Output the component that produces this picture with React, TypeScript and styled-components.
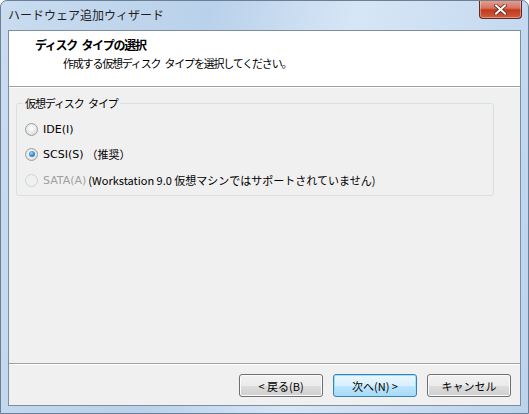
import React from "react";
import styled, { createGlobalStyle } from "styled-components";

const GlobalStyle = createGlobalStyle`
  html, body {
    margin: 0;
    padding: 0;
    background: #ffffff;
  }
  body {
    font-family: "Noto Sans CJK JP", "DejaVu Sans", sans-serif;
    font-size: 12px;
    color: #000;
  }
`;

const Window = styled.div`
  width: 529px;
  height: 414px;
  box-sizing: border-box;
  border: 1px solid #6b7f96;
  border-radius: 7px 7px 0 0;
  background: linear-gradient(100deg, #c9dcf0 0%, #b9d1ea 35%, #d7e6f6 60%, #bcd3ec 100%);
  display: flex;
  flex-direction: column;
  overflow: hidden;
`;

const TitleBar = styled.div`
  height: 29px;
  display: flex;
  align-items: flex-start;
  justify-content: space-between;
  padding-left: 7px;
`;

const TitleText = styled.span`
  margin-top: 5px;
  font-size: 12px;
  color: #1e1e1e;
`;

const CloseButton = styled.div`
  width: 41px;
  height: 18px;
  margin-right: 6px;
  margin-top: -1px;
  border: 1px solid #5d2a25;
  border-top: none;
  border-radius: 0 0 4px 4px;
  background: linear-gradient(180deg, #e8a393 0%, #d6735f 45%, #c1381d 55%, #d15b3c 100%);
  display: flex;
  align-items: center;
  justify-content: center;
  box-shadow: inset 0 0 0 1px rgba(255, 255, 255, 0.35);
`;

const Client = styled.div`
  flex: 1;
  margin: 0 7px 7px 7px;
  border: 1px solid #7e8ea0;
  background: #f0f0f0;
  display: flex;
  flex-direction: column;
`;

const Header = styled.div`
  height: 56px;
  background: #ffffff;
  border-bottom: 1px solid #a0a0a0;
  box-shadow: 0 1px 0 #ffffff;
  padding: 6px 0 0 26px;
  box-sizing: border-box;
`;

const HeaderTitle = styled.div`
  font-weight: bold;
  font-size: 12px;
  line-height: 16px;
  letter-spacing: -1.3px;
  word-spacing: 3px;
`;

const HeaderSub = styled.div`
  font-size: 11px;
  line-height: 16px;
  margin-left: 28px;
  margin-top: 2px;
  letter-spacing: -1.2px;
  word-spacing: 3px;
`;

const Body = styled.div`
  flex: 1;
  padding: 8px 26px 0 7px;
`;

const Group = styled.fieldset`
  margin: 0;
  border: 1px solid #d5dfe5;
  border-radius: 3px;
  padding: 12px 8px 8px 8px;
  height: 101px;
  box-sizing: border-box;
  display: flex;
  flex-direction: column;
  gap: 10px;
`;

const Legend = styled.legend`
  padding: 0 2px;
  margin-left: -2px;
  font-size: 11px;
  letter-spacing: -1.1px;
  word-spacing: 3px;
  color: #000;
`;

const Option = styled.div<{ $disabled?: boolean }>`
  display: flex;
  align-items: center;
  height: 16px;
  color: ${(p) => (p.$disabled ? "#a0a0a0" : "#000")};
  font-family: "DejaVu Sans", "Noto Sans CJK JP", sans-serif;
  font-size: 11px;
`;

const Radio = styled.span<{ $checked?: boolean; $disabled?: boolean }>`
  width: 11px;
  height: 11px;
  border-radius: 50%;
  border: 1px solid ${(p) => (p.$disabled ? "#cfd3d6" : "#9a9ea5")};
  background: ${(p) =>
    p.$disabled
      ? "#f0f0f0"
      : "radial-gradient(circle at 50% 40%, #ffffff 0%, #e6e6e6 60%, #d0d0d0 100%)"};
  display: inline-flex;
  align-items: center;
  justify-content: center;
  margin-right: 5px;
  flex-shrink: 0;
`;

const RadioDot = styled.span`
  width: 6px;
  height: 6px;
  border-radius: 50%;
  background: radial-gradient(circle at 40% 35%, #9fd3f4 0%, #3a8fd4 50%, #1d5f9a 100%);
`;

const Note = styled.span<{ $gap: number }>`
  margin-left: ${(p) => p.$gap}px;
  color: #000;
  font-family: "Noto Sans CJK JP", sans-serif;
`;

const Footer = styled.div`
  height: 39px;
  border-top: 1px solid #a0a0a0;
  box-shadow: inset 0 1px 0 #ffffff;
  display: flex;
  justify-content: flex-end;
  align-items: center;
  gap: 10px;
  padding-right: 9px;
  padding-top: 2px;
`;

const Button = styled.button<{ $default?: boolean }>`
  width: 84px;
  height: 23px;
  border: 1px solid ${(p) => (p.$default ? "#3c7fb1" : "#707070")};
  border-radius: 3px;
  background: ${(p) =>
    p.$default
      ? "linear-gradient(180deg, #eaf6fd 0%, #d9f0fc 50%, #bee6fd 51%, #a7d9f5 100%)"
      : "linear-gradient(180deg, #f2f2f2 0%, #ebebeb 50%, #dddddd 51%, #cfcfcf 100%)"};
  box-shadow: inset 0 0 0 1px ${(p) => (p.$default ? "#9be2fb" : "#fbfbfb")};
  font-family: "Noto Sans CJK JP", "DejaVu Sans", sans-serif;
  font-size: 11px;
  color: #000;
  padding: 0;
`;

export default function App() {
  return (
    <>
      <GlobalStyle />
      <Window>
        <TitleBar>
          <TitleText>ハードウェア追加ウィザード</TitleText>
          <CloseButton>
            <svg width="13" height="11" viewBox="0 0 13 11">
              <path
                d="M2 1.5 L11 9.5 M11 1.5 L2 9.5"
                stroke="#5a2a20"
                strokeWidth="3.6"
                strokeLinecap="square"
              />
              <path
                d="M2 1.5 L11 9.5 M11 1.5 L2 9.5"
                stroke="#ffffff"
                strokeWidth="2"
                strokeLinecap="square"
              />
            </svg>
          </CloseButton>
        </TitleBar>
        <Client>
          <Header>
            <HeaderTitle>ディスク タイプの選択</HeaderTitle>
            <HeaderSub>作成する仮想ディスク タイプを選択してください。</HeaderSub>
          </Header>
          <Body>
            <Group>
              <Legend>仮想ディスク タイプ</Legend>
              <Option>
                <Radio />
                IDE(I)
              </Option>
              <Option>
                <Radio $checked>
                  <RadioDot />
                </Radio>
                SCSI(S)
                <Note $gap={3}>（推奨）</Note>
              </Option>
              <Option $disabled>
                <Radio $disabled />
                SATA(A)
                <Note $gap={2}>(Workstation 9.0 仮想マシンではサポートされていません)</Note>
              </Option>
            </Group>
          </Body>
          <Footer>
            <Button>&lt; 戻る(B)</Button>
            <Button $default>次へ(N) &gt;</Button>
            <Button>キャンセル</Button>
          </Footer>
        </Client>
      </Window>
    </>
  );
}
